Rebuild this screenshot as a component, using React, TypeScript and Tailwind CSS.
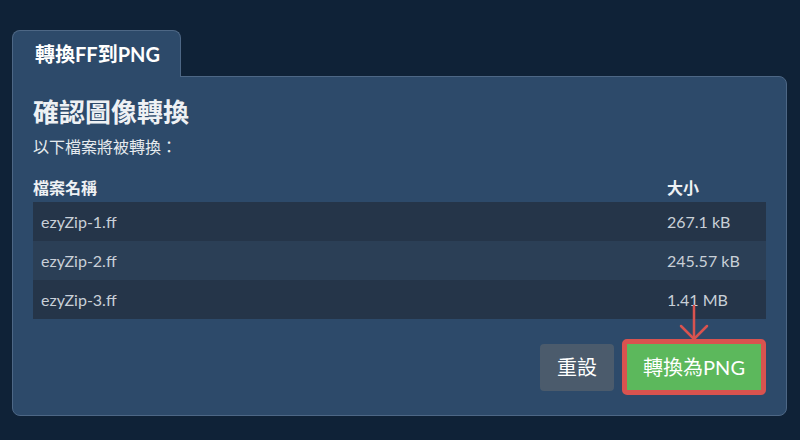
import React from "react";

const rows = [
  { name: "ezyZip-1.ff", size: "267.1 kB" },
  { name: "ezyZip-2.ff", size: "245.57 kB" },
  { name: "ezyZip-3.ff", size: "1.41 MB" },
];

export default function App() {
  return (
    <div
      className="w-[800px] h-[440px] bg-[#0f2237] pt-[30px] pl-[12px] pr-[13px] overflow-hidden"
      style={{ fontFamily: '"Lato", "Noto Sans CJK TC", sans-serif' }}
    >
      <div className="flex flex-col">
        <div className="relative z-10 self-start -mb-px h-[47px] rounded-t-[8px] border border-b-0 border-[#4d6785] bg-[#2d4a6a] pl-[22px] pr-[20px] pt-[9px] text-[20px] font-bold leading-[28px] text-white">
          轉換FF到PNG
        </div>
        <div className="rounded-b-[8px] rounded-tr-[8px] border border-[#4d6785] bg-[#2d4a6a] px-[20px] pt-[19px] pb-[20px]">
          <h1 className="h-[32px] text-[26px] font-bold leading-[32px] text-[#eef1f4]">確認圖像轉換</h1>
          <p className="mt-[7px] text-[16px] leading-[24px] text-[#e6eaee]">以下檔案將被轉換：</p>
          <div className="mt-[17px] grid grid-cols-[1fr_107px] pb-[2px] text-[16px] font-bold leading-[24px] text-[#eef1f4]">
            <div>檔案名稱</div>
            <div className="pl-[8px]">大小</div>
          </div>
          <div className="flex flex-col">
            {rows.map((r, i) => (
              <div
                key={r.name}
                className={
                  "grid h-[39px] grid-cols-[1fr_107px] items-center text-[16px] text-[#c9d0d8] " +
                  (i % 2 === 1 ? "bg-[#2b3f56]" : "bg-[#253549]")
                }
              >
                <div className="pl-[8px]">{r.name}</div>
                <div className="pl-[8px]">{r.size}</div>
              </div>
            ))}
          </div>
          <div className="mt-[20px] flex items-center justify-end gap-[8px]">
            <button className="h-[47px] rounded-[4px] bg-[#4b5b6c] px-[17px] text-[20px] leading-[28px] text-white">
              重設
            </button>
            <div className="relative rounded-[5px] border-[5px] border-[#d9534f]">
              <svg
                className="absolute left-1/2 top-[-40px] -translate-x-1/2"
                width="32"
                height="38"
                viewBox="0 0 32 38"
                fill="none"
                stroke="#d9534f"
                strokeWidth="2.5"
                strokeLinecap="round"
                strokeLinejoin="round"
              >
                <line x1="16" y1="2" x2="16" y2="35" />
                <polyline points="3,22 16,35 29,22" />
              </svg>
              <button className="block h-[46px] bg-[#5cb85c] px-[16px] text-[20px] leading-[28px] text-white">
                轉換為PNG
              </button>
            </div>
          </div>
        </div>
      </div>
    </div>
  );
}
